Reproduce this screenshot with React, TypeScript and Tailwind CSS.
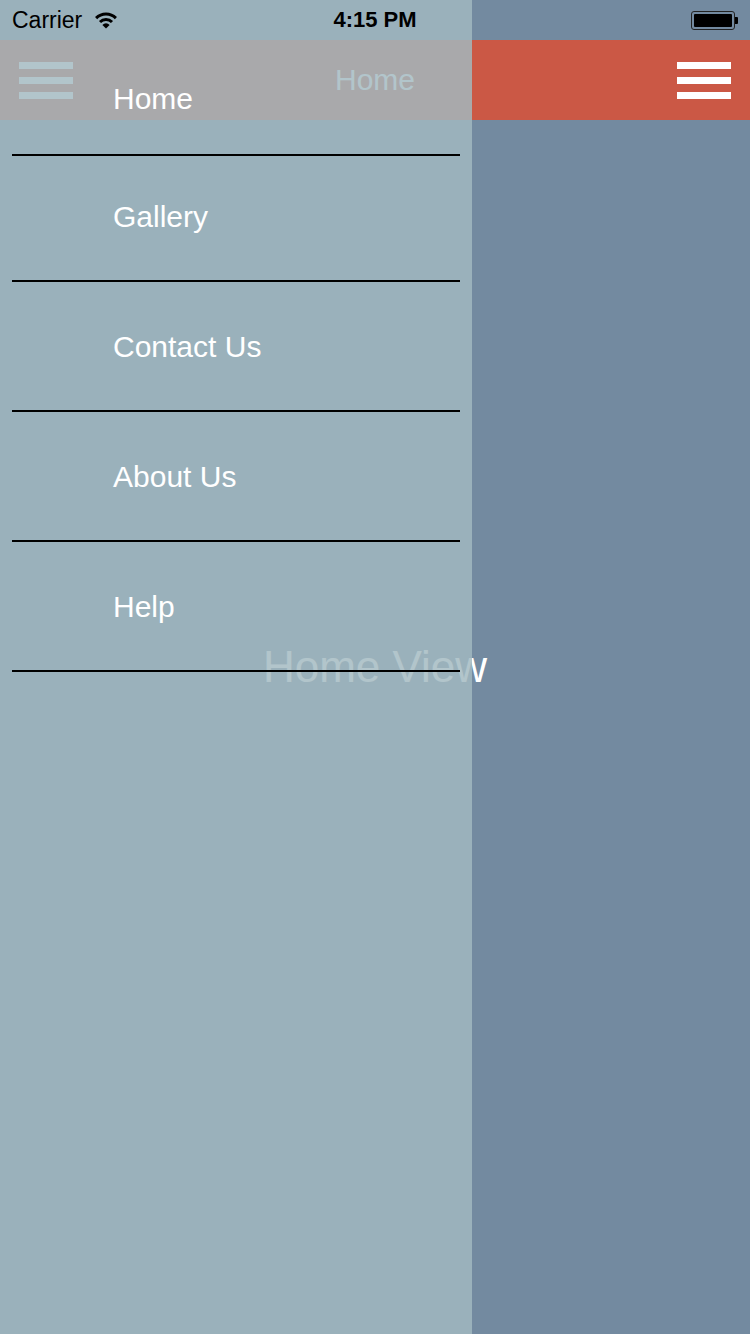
import React from "react";

const menu = [
  { label: "Home", h: "h-[114px]", pb: "pt-[3px]" },
  { label: "Gallery", h: "h-[124px]", pb: "pb-[2px]" },
  { label: "Contact Us", h: "h-[128px]", pb: "pt-[2px]" },
  { label: "About Us", h: "h-[128px]", pb: "pt-[2px]" },
  { label: "Help", h: "h-[128px]", pb: "pt-[2px]" },
];

function Burger({ className }: { className: string }) {
  return (
    <div className="flex flex-col gap-[8px] w-[54px]">
      <div className={`h-[7px] w-full ${className}`} />
      <div className={`h-[7px] w-full ${className}`} />
      <div className={`h-[7px] w-full ${className}`} />
    </div>
  );
}

function Wifi() {
  return (
    <svg width="24" height="18" viewBox="0 0 24 18" className="block">
      <path d="M12 17.5 L8.4 13.9 A5 5 0 0 1 15.6 13.9 Z" fill="#000" />
      <path d="M5.99 10.99 A8.5 8.5 0 0 1 18.01 10.99" stroke="#000" strokeWidth="3" fill="none" />
      <path d="M2.1 7.1 A14 14 0 0 1 21.9 7.1" stroke="#000" strokeWidth="3" fill="none" />
    </svg>
  );
}

export default function App() {
  return (
    <div
      className="relative w-[750px] h-[1334px] overflow-hidden bg-[#738aa0]"
      style={{ fontFamily: '"Liberation Sans", Arial, sans-serif' }}
    >
      {/* main view */}
      <div className="flex flex-col h-full">
        <div className="h-[40px]" />
        <div className="h-[80px] bg-[#cb5845] flex items-center justify-between px-[19px]">
          <Burger className="bg-white" />
          <span className="text-white text-[30px] leading-none">Home</span>
          <Burger className="bg-white" />
        </div>
        <div className="flex-1 flex items-center justify-center pb-[120px]">
          <span className="text-white text-[44px] leading-none">Home View</span>
        </div>
      </div>

      {/* drawer */}
      <div className="absolute left-0 top-0 bottom-0 w-[472px] bg-[rgba(162,185,193,0.83)] flex flex-col pt-[40px]">
        {menu.map((m) => (
          <div key={m.label} className="flex flex-col">
            <div className={`${m.h} ${m.pb} flex items-center pl-[113px]`}>
              <span className="text-white text-[30px] leading-none">{m.label}</span>
            </div>
            <div className="mx-[12px] h-[2px] bg-black" />
          </div>
        ))}
      </div>

      {/* status bar */}
      <div className="absolute top-0 left-0 right-0 h-[40px] flex items-center justify-between pl-[12px] pr-[12px]">
        <div className="flex items-center gap-[12px] w-[200px]">
          <span className="text-black text-[23px] leading-none">Carrier</span>
          <Wifi />
        </div>
        <span className="text-black text-[22px] font-semibold leading-none">4:15 PM</span>
        <div className="flex items-center justify-end w-[200px]">
          <div className="w-[44px] h-[19px] rounded-[3px] border border-[#222] p-[2px]">
            <div className="w-full h-full bg-black rounded-[1px]" />
          </div>
          <div className="w-[3px] h-[7px] bg-black rounded-r-[1px]" />
        </div>
      </div>
    </div>
  );
}
